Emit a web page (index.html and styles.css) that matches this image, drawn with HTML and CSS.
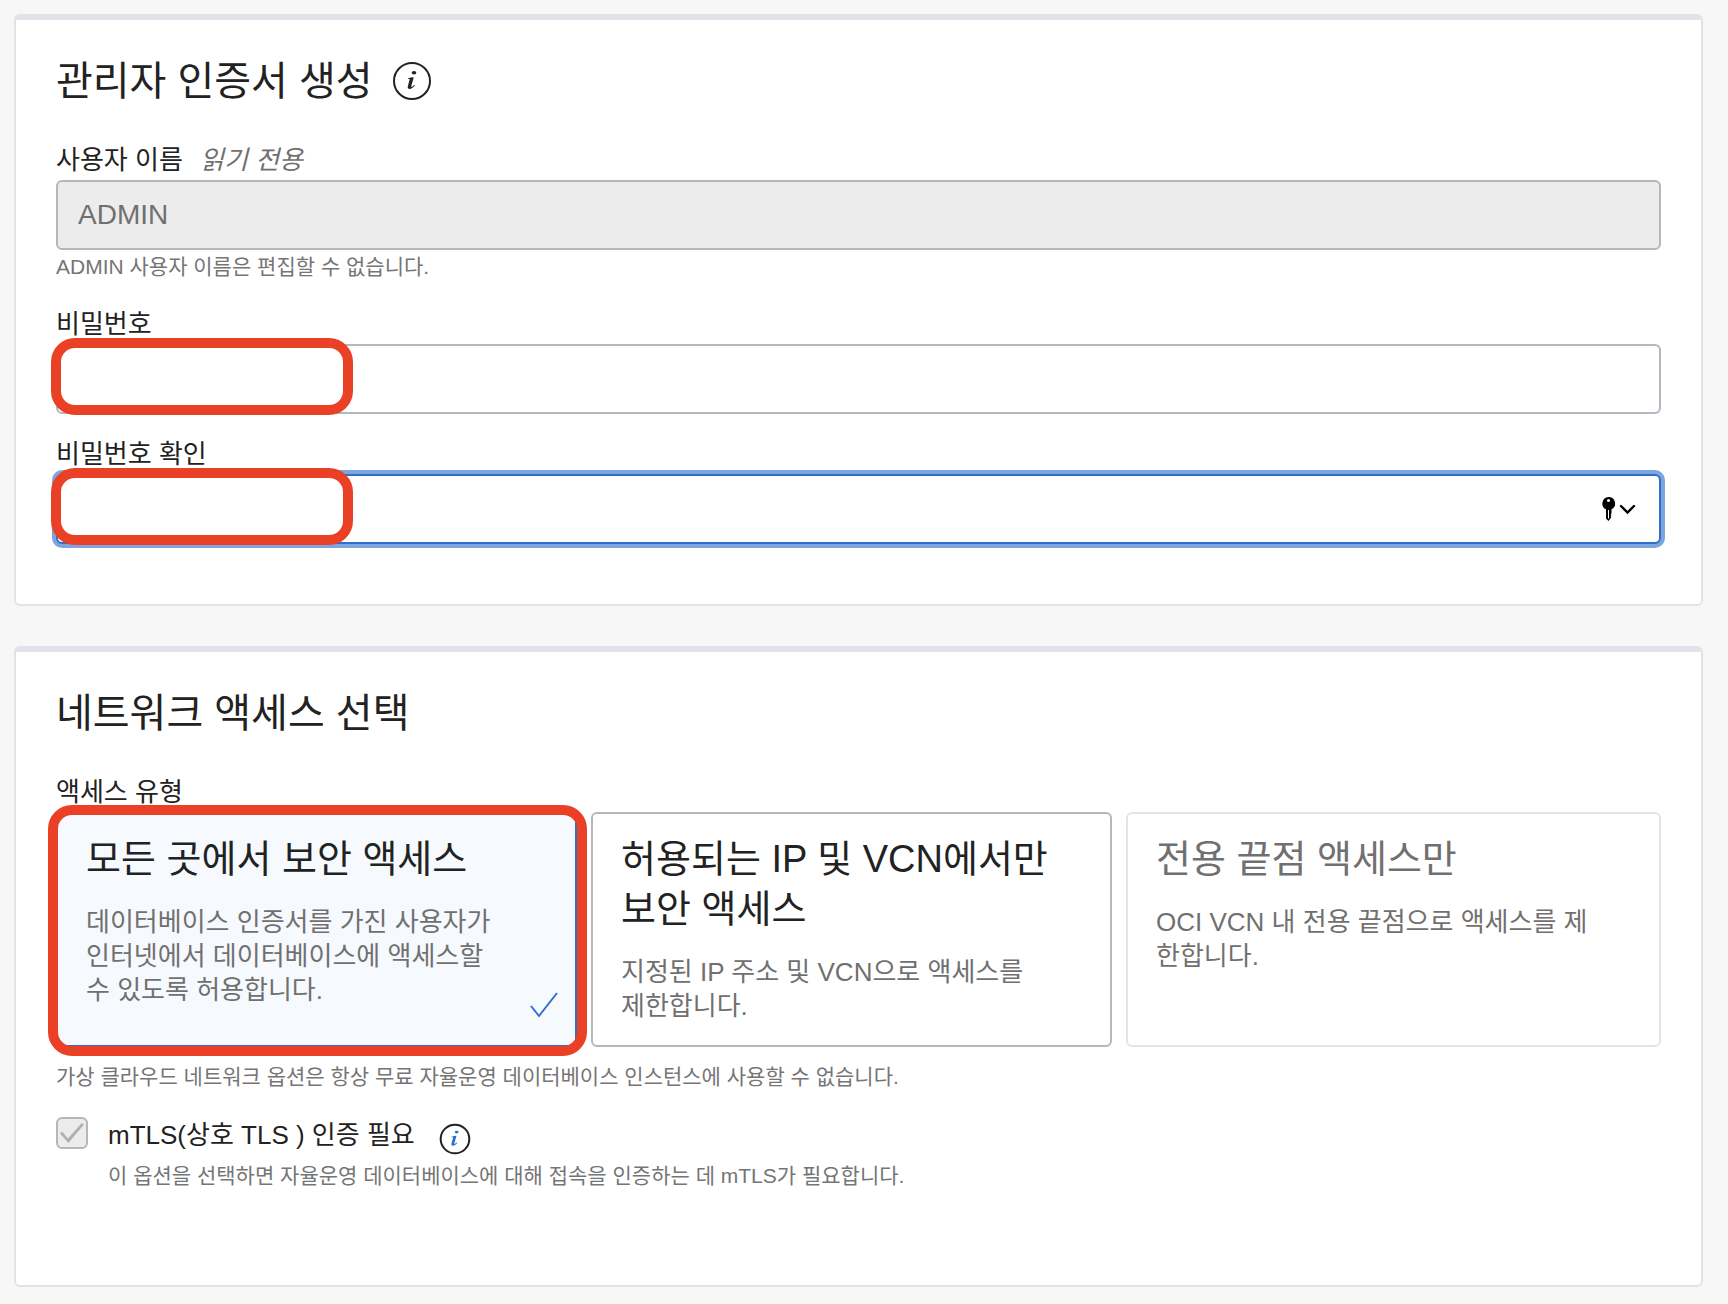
FILE: index.html
```html
<!DOCTYPE html>
<html lang="ko">
<head>
    <meta charset="UTF-8">
    <meta name="viewport" content="width=device-width, initial-scale=1.0">
    <title>자율운영 데이터베이스 생성</title>
    <link rel="stylesheet" href="styles.css">
</head>
<body>
    <form class="page">
        <section class="card">
            <div class="card-header">
                <h2>관리자 인증서 생성</h2>
                <button type="button" class="info" aria-label="정보">
                    <svg width="38" height="38" viewBox="0 0 38 38" aria-hidden="true">
                        <circle cx="19" cy="19" r="18" fill="none" stroke="#222" stroke-width="2"/>
                        <ellipse cx="21" cy="10.800" rx="2.300" ry="1.700" fill="#222"/>
                        <path d="M15 16.2c1.600-.6 3.500-.8 5.800-1l-2.600 9c-.3 1.200 1 .7 3.100-1.200l.6.6c-2 2.500-3.800 3.500-5.500 3.400-1.700-.1-1.900-1.400-1.500-2.900l1.700-6.400c.2-.8-.3-.9-1.600-.8z" fill="#222"/>
                    </svg>
                </button>
            </div>

            <div class="field">
                <label for="username">사용자 이름 <em>읽기 전용</em></label>
                <input type="text" id="username" value="ADMIN" readonly>
                <p class="help">ADMIN 사용자 이름은 편집할 수 없습니다.</p>
            </div>

            <div class="field">
                <label for="password">비밀번호</label>
                <div class="input-wrap">
                    <input type="password" id="password">
                    <span class="marker marker-input"></span>
                </div>
            </div>

            <div class="field">
                <label for="confirm">비밀번호 확인</label>
                <div class="input-wrap">
                    <input type="password" id="confirm" class="focused">
                    <button type="button" class="key-button" aria-label="저장된 비밀번호">
                        <svg width="36" height="26" viewBox="0 0 36 26" aria-hidden="true">
                            <path fill-rule="evenodd" d="M7.500 1a6.500 6.500 0 0 1 3 12.300v4l-.8 1 .8 1-.8 1 .5 1.200L7.500 25 5 22.500v-9.200A6.500 6.500 0 0 1 7.500 1zm0 2a1.500 1.500 0 1 0 0 3 1.500 1.500 0 0 0 0-3zM7 14v8.500h1V14z"/>
                            <path d="M20 10l6.500 6.500L33 10" fill="none" stroke="#000" stroke-width="2.400" stroke-linecap="round"/>
                        </svg>
                    </button>
                    <span class="marker marker-input"></span>
                </div>
            </div>
        </section>

        <section class="card card-network">
            <div class="card-header">
                <h2>네트워크 액세스 선택</h2>
            </div>

            <fieldset>
                <legend>액세스 유형</legend>
                <div class="tiles">
                    <label class="tile selected">
                        <input type="radio" name="access" value="everywhere" checked>
                        <span class="tile-title">모든 곳에서 보안 액세스</span>
                        <span class="tile-text">데이터베이스 인증서를 가진 사용자가 인터넷에서 데이터베이스에 액세스할 수 있도록 허용합니다.</span>
                        <svg class="tile-check" width="30" height="26" viewBox="0 0 30 26" aria-hidden="true">
                            <path d="M2 14l8 10L28 1" fill="none" stroke="#2f6fc8" stroke-width="2"/>
                        </svg>
                        <span class="marker marker-tile"></span>
                    </label>
                    <label class="tile">
                        <input type="radio" name="access" value="allowed">
                        <span class="tile-title">허용되는 IP 및 VCN에서만 보안 액세스</span>
                        <span class="tile-text">지정된 IP 주소 및 VCN으로 액세스를 제한합니다.</span>
                    </label>
                    <label class="tile disabled">
                        <input type="radio" name="access" value="private" disabled>
                        <span class="tile-title">전용 끝점 액세스만</span>
                        <span class="tile-text">OCI VCN 내 전용 끝점으로 액세스를 제한합니다.</span>
                    </label>
                </div>
            </fieldset>
            <p class="help">가상 클라우드 네트워크 옵션은 항상 무료 자율운영 데이터베이스 인스턴스에 사용할 수 없습니다.</p>

            <div class="check-row">
                <input type="checkbox" id="mtls" checked disabled>
                <div>
                    <div class="check-label">
                        <label for="mtls">mTLS(상호 TLS ) 인증 필요</label>
                        <button type="button" class="info" aria-label="정보">
                            <svg width="32" height="32" viewBox="0 0 38 38" aria-hidden="true">
                                <circle cx="19" cy="19" r="17" fill="none" stroke="#222" stroke-width="2.400"/>
                                <ellipse cx="21" cy="10.800" rx="2.300" ry="1.700" fill="#2f6fc8"/>
                                <path d="M15 16.2c1.600-.6 3.500-.8 5.800-1l-2.600 9c-.3 1.200 1 .7 3.100-1.200l.6.6c-2 2.500-3.800 3.500-5.500 3.400-1.700-.1-1.900-1.400-1.500-2.900l1.700-6.400c.2-.8-.3-.9-1.600-.8z" fill="#2f6fc8"/>
                            </svg>
                        </button>
                    </div>
                    <p class="help">이 옵션을 선택하면 자율운영 데이터베이스에 대해 접속을 인증하는 데 mTLS가 필요합니다.</p>
                </div>
            </div>
        </section>
    </form>
</body>
</html>
```

FILE: styles.css
```css
* {
    box-sizing: border-box;
}
body {
    margin: 0;
    background: #f7f7f7;
    color: #222;
    font-family: "Liberation Sans", "Noto Sans CJK KR", sans-serif;
    font-size: 26px;
    line-height: 40px;
}
h2, p {
    margin: 0;
    font-weight: normal;
}
.page {
    display: flex;
    flex-direction: column;
    gap: 40px;
    padding: 14px 25px 17px 14px;
}
.card {
    padding: 40px 40px 60px;
    background: white;
    border: 2px solid #e2e3e8;
    border-top-width: 6px;
    border-radius: 6px;
}
.card-network {
    padding-bottom: 92px;
}
.card-header {
    display: flex;
    align-items: center;
    gap: 20px;
    margin-bottom: 38px;
}
h2 {
    font-size: 40px;
    line-height: 42px;
}
.info {
    display: flex;
    padding: 0;
    border: none;
    background: none;
    cursor: pointer;
}
.field + .field {
    margin-top: 20px;
}
.field label {
    display: block;
}
.field em {
    margin-left: 10px;
    color: #707070;
}
.field input {
    display: block;
    width: 100%;
    height: 70px;
    padding: 0 20px;
    border: 2px solid #b3b7bf;
    border-radius: 6px;
    background: white;
    font-family: inherit;
    font-size: 28px;
    outline: none;
}
.field input:read-only {
    background: #ececec;
    color: #707070;
}
.field input.focused {
    border-color: #2f6fc8;
    box-shadow: 0 0 0 4px #7fa5df;
}
.help {
    color: #757575;
    font-size: 21px;
    line-height: 34px;
}
.input-wrap {
    position: relative;
}
.key-button {
    position: absolute;
    top: 22px;
    right: 24px;
    display: flex;
    padding: 0;
    border: none;
    background: none;
    cursor: pointer;
}

/* red highlight frames */
.marker {
    position: absolute;
    border: 10px solid #ea4126;
    border-radius: 24px;
    pointer-events: none;
}
.marker-input {
    top: -6px;
    left: -5px;
    width: 302px;
    height: 77px;
}
.marker-tile {
    top: -9px;
    right: -12px;
    bottom: -11px;
    left: -10px;
}

fieldset {
    margin: 0;
    padding: 0;
    border: none;
    min-width: 0;
}
legend {
    padding: 0;
}
.tiles {
    display: grid;
    grid-template-columns: repeat(3, 1fr);
    margin-bottom: 13px;
}
.tile {
    position: relative;
    display: flex;
    flex-direction: column;
    gap: 21px;
    margin-right: 14px;
    padding: 20px 58px 22px 28px;
    border: 2px solid #b3b7bf;
    border-radius: 6px;
    cursor: pointer;
}
.tile:last-child {
    margin-right: 0;
}
.tile input {
    position: absolute;
    opacity: 0;
}
.tile-title {
    font-size: 38px;
    line-height: 50px;
}
.tile-text {
    padding-right: 8px;
    color: #707070;
    line-height: 34px;
}
.tile.selected {
    border-color: #2f6fc8;
    background: #f6f9fe;
}
.tile.disabled {
    border-color: #e4e4e6;
    color: #707070;
    cursor: default;
}
.tile-check {
    position: absolute;
    right: 16px;
    bottom: 27px;
}

.check-row {
    display: flex;
    gap: 20px;
    margin-top: 21px;
}
.check-row input {
    appearance: none;
    width: 32px;
    height: 32px;
    margin: 2px 0 0;
    border: 2px solid #b3b7bf;
    border-radius: 6px;
    background: #ececec;
    display: grid;
    place-items: center;
}
.check-row input:checked::before {
    content: "";
    width: 24px;
    height: 20px;
    background: #b0b0b0;
    clip-path: polygon(0 52%, 9% 42%, 33% 78%, 91% 0, 100% 8%, 35% 100%);
}
.check-label {
    display: flex;
    align-items: flex-end;
    gap: 24px;
    margin-bottom: 4px;
}
```
